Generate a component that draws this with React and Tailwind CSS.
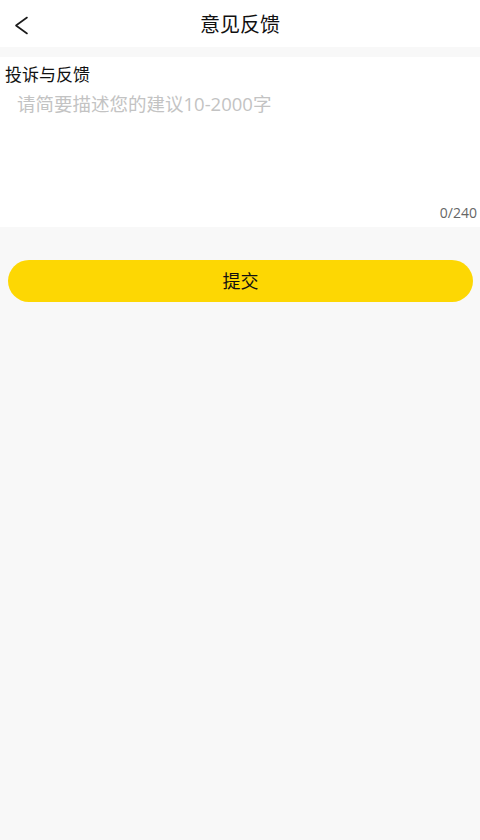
import { useState } from "react";

const font = { fontFamily: '"Open Sans", "Noto Sans CJK SC", sans-serif' };

export default function App() {
  const [text, setText] = useState("");

  return (
    <div className="min-h-[840px] w-full bg-[#f8f8f8]" style={font}>
      <div className="relative flex h-[47px] items-center justify-center bg-white pt-[2px]">
        <button type="button" className="absolute left-[14px] top-[16px] p-0">
          <svg width="16" height="19" viewBox="0 0 16 19" fill="none">
            <path d="M13 1.5 L2 9.5 L13 17.5" stroke="#1a1a1a" strokeWidth="1.6" strokeLinecap="round" strokeLinejoin="round" />
          </svg>
        </button>
        <h1 className="text-[20px] leading-none text-[#111]">意见反馈</h1>
      </div>

      <div className="mt-[10px] flex h-[170px] flex-col bg-white">
        <div className="px-[5px] pt-[8px] text-[17px] leading-[20px] text-[#111]">投诉与反馈</div>
        <textarea
          value={text}
          maxLength={240}
          onChange={(e) => setText(e.target.value)}
          placeholder="请简要描述您的建议10-2000字"
          className="mt-[4px] flex-1 resize-none px-[17px] py-[4px] text-[18.5px] leading-[22px] text-[#333] outline-none placeholder:text-[#c3c3c3]"
        />
        <div className="pb-[6px] pr-[3px] text-right text-[14px] leading-[16px] text-[#666]">
          {text.length}/240
        </div>
      </div>

      <div className="px-[8px] pt-[33px]">
        <button
          type="button"
          className="flex h-[42px] w-[465px] items-center justify-center rounded-full bg-[#fdd703] text-[18px] text-[#111]"
        >
          提交
        </button>
      </div>
    </div>
  );
}
